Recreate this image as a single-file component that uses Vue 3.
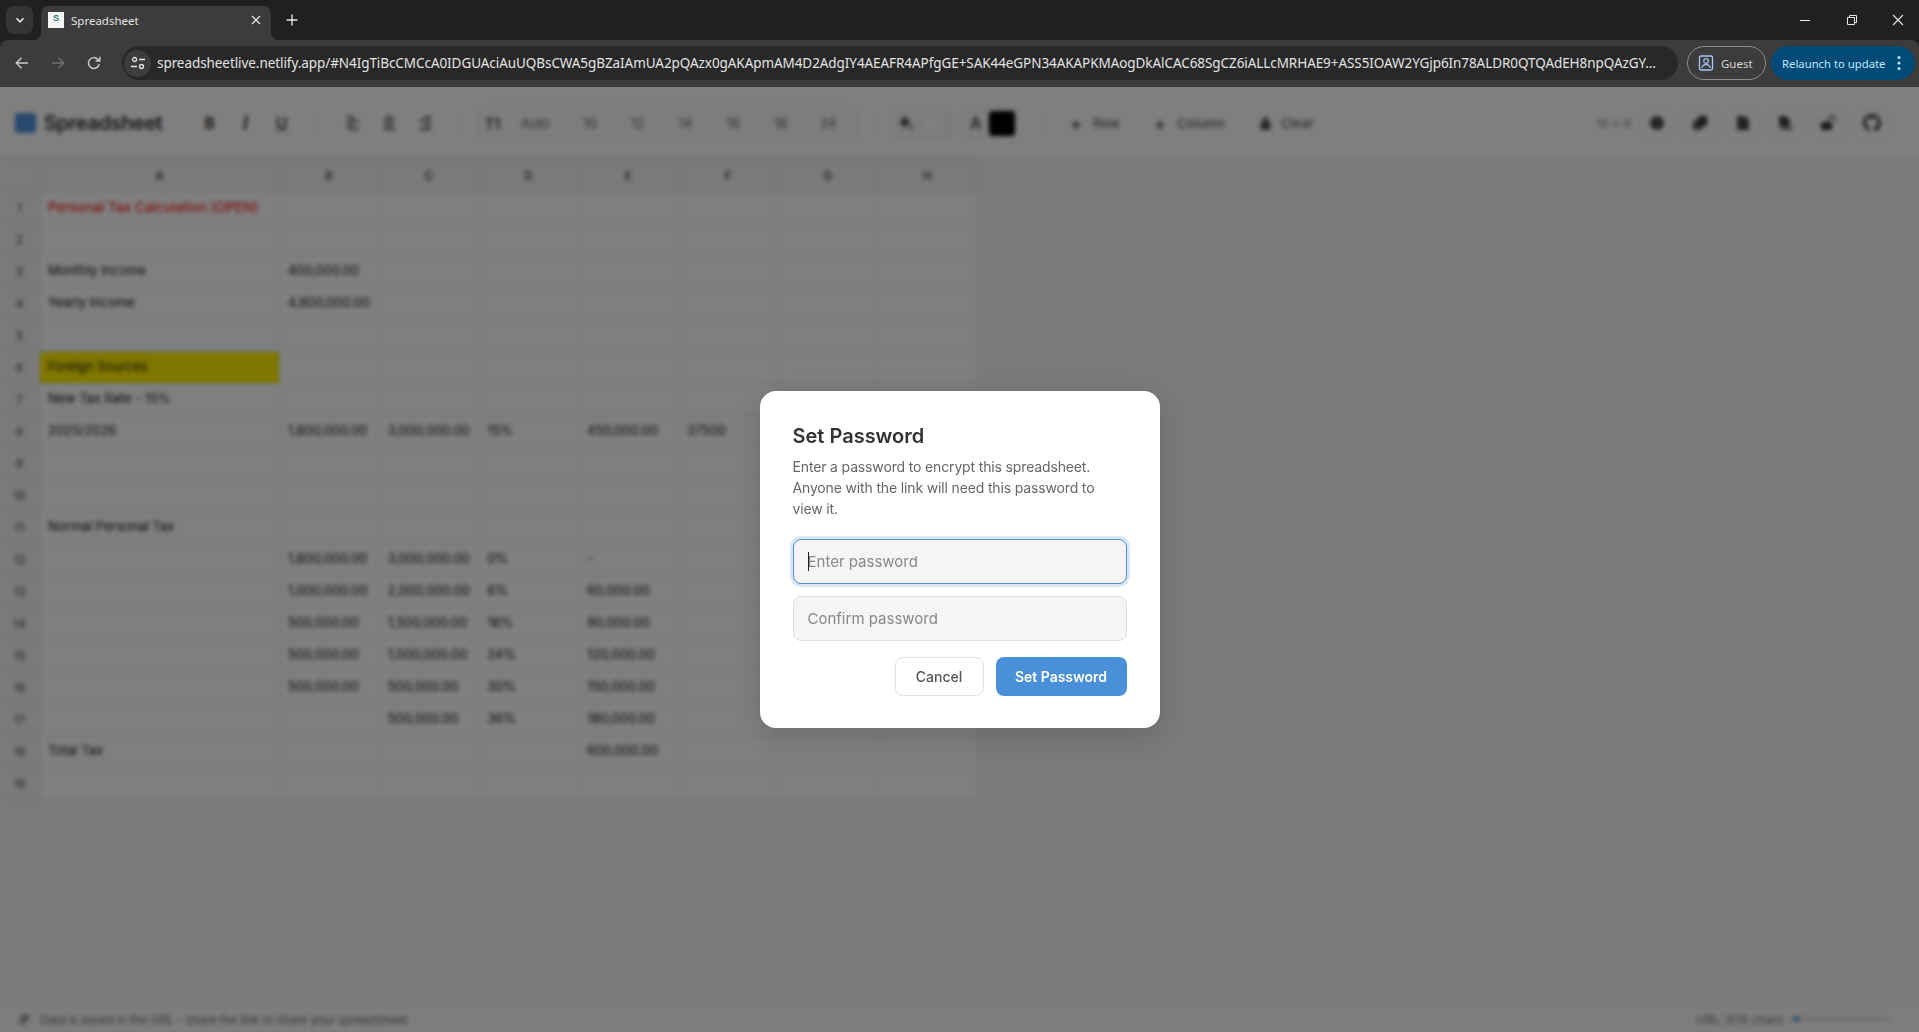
<script setup>
const url =
  'spreadsheetlive.netlify.app/#N4IgTiBcCMCcA0IDGUAciAuUQBsCWA5gBZaIAmUA2pQAzx0gAKApmAM4D2AdgIY4AEAFR4APfgGE+SAK44eGPN34AKAPKMAogDkAlCAC68SgCZ6iALLcMRHAE9+ASS5IOAW2YGjp6In78ALDR0QTQAdEH8npQAzGY...'

const columns = ['A', 'B', 'C', 'D', 'E', 'F', 'G', 'H']
const fontSizes = ['10', '12', '14', '16', '18', '24']

const filled = {
  1: { a: 'Personal Tax Calculation (OPEN)', kind: 'red' },
  3: { a: 'Monthly Income', rest: ['400,000.00'] },
  4: { a: 'Yearly Income', rest: ['4,800,000.00'] },
  6: { a: 'Foreign Sources', kind: 'yellow' },
  7: { a: 'New Tax Rate - 15%' },
  8: { a: '2025/2026', rest: ['1,800,000.00', '3,000,000.00', '15%', '450,000.00', '37500'] },
  11: { a: 'Normal Personal Tax' },
  12: { rest: ['1,800,000.00', '3,000,000.00', '0%', '-'] },
  13: { rest: ['1,000,000.00', '2,000,000.00', '6%', '60,000.00'] },
  14: { rest: ['500,000.00', '1,500,000.00', '18%', '90,000.00'] },
  15: { rest: ['500,000.00', '1,000,000.00', '24%', '120,000.00'] },
  16: { rest: ['500,000.00', '500,000.00', '30%', '150,000.00'] },
  17: { rest: ['', '500,000.00', '36%', '180,000.00'] },
  18: { a: 'Total Tax', rest: ['', '', '', '600,000.00'] },
}

const rows = Array.from({ length: 19 }, (_, i) => {
  const row = filled[i + 1] || {}
  const rest = row.rest || []
  return {
    num: i + 1,
    kind: row.kind || '',
    cells: [row.a || '', ...Array.from({ length: 7 }, (_, c) => rest[c] || '')],
  }
})
</script>

<template>
  <div class="browser">
    <div class="tabstrip">
      <div class="tab-search">
        <svg width="10" height="10" viewBox="0 0 10 10"><path d="M1.5 3.2 5 6.8l3.5-3.6" fill="none" stroke="#e3e3e3" stroke-width="1.6" /></svg>
      </div>
      <div class="tab">
        <span class="favicon">S</span>
        <span class="tab-title">Spreadsheet</span>
        <svg class="tab-close" width="10" height="10" viewBox="0 0 10 10"><path d="M1 1l8 8M9 1 1 9" stroke="#e3e3e3" stroke-width="1.3" /></svg>
      </div>
      <svg class="new-tab" width="12" height="12" viewBox="0 0 12 12"><path d="M6 .5v11M.5 6h11" stroke="#e3e3e3" stroke-width="1.4" /></svg>
      <div class="window-controls">
        <svg width="12" height="12" viewBox="0 0 12 12"><path d="M1 6.5h10" stroke="#e8e8e8" /></svg>
        <svg width="12" height="12" viewBox="0 0 12 12"><path d="M1.5 3.5h7v7h-7zM3.5 3.5v-2h7v7h-2" fill="none" stroke="#e8e8e8" /></svg>
        <svg width="12" height="12" viewBox="0 0 12 12"><path d="M1 1l10 10M11 1 1 11" stroke="#e8e8e8" stroke-width="1.1" /></svg>
      </div>
    </div>

    <div class="navbar">
      <svg class="nav-icon" width="16" height="16" viewBox="0 0 16 16"><path d="M14 8H2.5M7.5 2.8 2.3 8l5.2 5.2" fill="none" stroke="#c7c7c7" stroke-width="1.5" /></svg>
      <svg class="nav-icon" width="16" height="16" viewBox="0 0 16 16"><path d="M2 8h11.5M8.5 2.8 13.7 8l-5.2 5.2" fill="none" stroke="#6e6e6e" stroke-width="1.5" /></svg>
      <svg class="nav-icon" width="16" height="16" viewBox="0 0 16 16"><path d="M13.2 9a5.4 5.4 0 1 1-1.3-4.6L13.8 6M13.8 1.8V6H9.6" fill="none" stroke="#c7c7c7" stroke-width="1.5" /></svg>
      <div class="omnibox">
        <span class="site-info">
          <svg width="16" height="16" viewBox="0 0 16 16"><circle cx="4.5" cy="4.5" r="2" fill="none" stroke="#e3e3e3" stroke-width="1.3" /><path d="M9 4.5h6M1 11.5h6" stroke="#e3e3e3" stroke-width="1.3" /><circle cx="11.5" cy="11.5" r="2" fill="none" stroke="#e3e3e3" stroke-width="1.3" /></svg>
        </span>
        <span class="url">{{ url }}</span>
      </div>
      <div class="guest">
        <svg width="16" height="16" viewBox="0 0 16 16"><rect x="1.5" y="1" width="13" height="14" rx="1.5" fill="none" stroke="#a8c7fa" stroke-width="1.3" /><circle cx="8" cy="6" r="2.3" fill="none" stroke="#a8c7fa" stroke-width="1.2" /><path d="M3.8 13c.4-2.4 2.2-3.3 4.2-3.3s3.8.9 4.2 3.3" fill="none" stroke="#a8c7fa" stroke-width="1.2" /></svg>
        <span>Guest</span>
      </div>
      <div class="relaunch">
        <span>Relaunch to update</span>
        <svg width="4" height="16" viewBox="0 0 4 16"><circle cx="2" cy="2.5" r="1.5" fill="#c2e7ff" /><circle cx="2" cy="8" r="1.5" fill="#c2e7ff" /><circle cx="2" cy="13.5" r="1.5" fill="#c2e7ff" /></svg>
      </div>
    </div>

    <div class="page">
      <header class="toolbar">
        <div class="brand">
          <svg width="21" height="20" viewBox="0 0 21 20"><rect width="21" height="20" rx="3" fill="#4a90d9" /><path d="M7 0v20M14 0v20" stroke="#6ea6e2" /></svg>
          <span>Spreadsheet</span>
        </div>

        <div class="tool-group first">
          <button class="tool bold">B</button>
          <button class="tool italic">I</button>
          <button class="tool underline">U</button>
        </div>
        <span class="sep"></span>
        <div class="tool-group">
          <button class="tool">
            <svg width="14" height="16" viewBox="0 0 14 16"><path d="M1 2h7M1 6h12M1 10h7M1 14h12" stroke="#555" stroke-width="2" /></svg>
          </button>
          <button class="tool">
            <svg width="14" height="16" viewBox="0 0 14 16"><path d="M3 2h8M1 6h12M3 10h8M1 14h12" stroke="#555" stroke-width="2" /></svg>
          </button>
          <button class="tool">
            <svg width="14" height="16" viewBox="0 0 14 16"><path d="M6 2h7M1 6h12M6 10h7M1 14h12" stroke="#555" stroke-width="2" /></svg>
          </button>
        </div>
        <span class="sep"></span>

        <div class="size-group">
          <span class="size-icon">T1</span>
          <button class="size-btn auto">Auto</button>
          <button v-for="s in fontSizes" :key="s" class="size-btn">{{ s }}</button>
        </div>
        <span class="sep short"></span>

        <div class="color-group fill">
          <svg width="16" height="16" viewBox="0 0 16 16"><path d="M7 1 1.5 7.5 7 13l5.5-5.5z" fill="#555" /><path d="M13.5 10c1 1.4 1.5 2.2 1.5 3a1.5 1.5 0 0 1-3 0c0-.8.5-1.6 1.5-3z" fill="#555" /></svg>
          <span class="swatch white"></span>
        </div>
        <div class="color-group text">
          <span class="color-letter">A</span>
          <span class="swatch black"></span>
        </div>
        <span class="sep wide"></span>

        <button class="action"><b>+</b>Row</button>
        <button class="action"><b>+</b>Column</button>
        <button class="action">
          <svg width="13" height="15" viewBox="0 0 13 15"><path d="M4.5 1h4v3.5l3 2V14h-10V6.5l3-2z" fill="#555" /></svg>
          Clear
        </button>

        <div class="right-tools">
          <span class="dims">10 × 8</span>
          <button class="square">
            <svg width="16" height="16" viewBox="0 0 16 16"><circle cx="8" cy="8" r="7" fill="#444" /><path d="M1 8h14M8 1c4 4 4 10 0 14M8 1c-4 4-4 10 0 14" stroke="#666" fill="none" stroke-width=".7" /></svg>
          </button>
          <button class="square">
            <svg width="16" height="16" viewBox="0 0 16 16"><rect x="1" y="5" width="9" height="10" rx="1.5" fill="#555" /><rect x="6" y="1" width="9" height="10" rx="1.5" fill="#333" /></svg>
          </button>
          <button class="square">
            <svg width="14" height="16" viewBox="0 0 14 16"><path d="M1 1h8l4 4v10H1z" fill="#444" /><path d="M7 1v4M5 3h4" stroke="#777" /></svg>
          </button>
          <button class="square">
            <svg width="16" height="16" viewBox="0 0 16 16"><path d="M1 1h7l4 4v7H1z" fill="#444" /><path d="M3 14h12" stroke="#555" stroke-width="2" /></svg>
          </button>
          <button class="square">
            <svg width="18" height="16" viewBox="0 0 18 16"><rect x="1" y="7" width="11" height="8" rx="1.5" fill="#333" /><path d="M9 7V4a3 3 0 0 1 6 0v2" fill="none" stroke="#555" stroke-width="1.6" /></svg>
          </button>
          <button class="square">
            <svg width="18" height="18" viewBox="0 0 16 16"><path fill="#3d3d3d" d="M8 0C3.58 0 0 3.58 0 8c0 3.54 2.29 6.53 5.47 7.59.4.07.55-.17.55-.38 0-.19-.01-.82-.01-1.49-2.01.37-2.53-.49-2.69-.94-.09-.23-.48-.94-.82-1.13-.28-.15-.68-.52-.01-.53.63-.01 1.08.58 1.23.82.72 1.21 1.87.87 2.33.66.07-.52.28-.87.51-1.07-1.78-.2-3.64-.89-3.64-3.95 0-.87.31-1.59.82-2.15-.08-.2-.36-1.02.08-2.12 0 0 .67-.21 2.2.82.64-.18 1.32-.27 2-.27s1.36.09 2 .27c1.53-1.04 2.2-.82 2.2-.82.44 1.1.16 1.92.08 2.12.51.56.82 1.27.82 2.15 0 3.07-1.87 3.75-3.65 3.95.29.25.54.73.54 1.48 0 1.07-.01 1.93-.01 2.2 0 .21.15.46.55.38A8.01 8.01 0 0 0 16 8c0-4.42-3.58-8-8-8z" /></svg>
          </button>
        </div>
      </header>

      <main class="sheet">
        <div class="grid">
          <div class="corner head"></div>
          <div v-for="c in columns" :key="c" class="col-head head">{{ c }}</div>
          <template v-for="row in rows" :key="row.num">
            <div class="row-head head">{{ row.num }}</div>
            <div
              v-for="(cell, i) in row.cells"
              :key="i"
              class="cell"
              :class="i === 0 ? row.kind : ''"
            >{{ cell }}</div>
          </template>
        </div>
      </main>

      <footer class="status">
        <span class="status-left">
          <svg width="14" height="14" viewBox="0 0 14 14"><path d="M6 8 8.5 5.5M5 5.5 7 3.5a2.3 2.3 0 0 1 3.3 3.3L8.5 8.5M9 8.5l-2 2A2.3 2.3 0 0 1 3.7 7.2L5.5 5.5" fill="none" stroke="#555" stroke-width="1.5" /></svg>
          Data is saved in the URL - share the link to share your spreadsheet
        </span>
        <span class="status-right">
          URL: 674 chars
          <span class="meter"><span class="meter-fill"></span></span>
        </span>
      </footer>

      <div class="overlay">
        <div class="dialog">
          <h2>Set Password</h2>
          <p>Enter a password to encrypt this spreadsheet. Anyone with the link will need this password to view it.</p>
          <div class="field">
            <input class="focused" type="password" placeholder="Enter password" />
            <span class="caret"></span>
          </div>
          <div class="field">
            <input type="password" placeholder="Confirm password" />
          </div>
          <div class="dialog-actions">
            <button class="btn-cancel">Cancel</button>
            <button class="btn-primary">Set Password</button>
          </div>
        </div>
      </div>
    </div>
  </div>
</template>

<style>
html,
body {
  margin: 0;
  height: 100%;
  overflow: hidden;
}
</style>

<style scoped>
* {
  box-sizing: border-box;
}
button {
  font: inherit;
  border: 0;
  background: none;
  color: inherit;
  padding: 0;
}

.browser {
  display: flex;
  flex-direction: column;
  height: 1032px;
  font-family: "Noto Sans", sans-serif;
  background: #1f2120;
}

/* chrome */
.tabstrip {
  display: flex;
  align-items: flex-end;
  height: 40px;
  flex: none;
  position: relative;
}
.tab-search {
  width: 27px;
  height: 28px;
  margin: 0 8px 6px 6px;
  border-radius: 8px;
  background: #333534;
  display: flex;
  align-items: center;
  justify-content: center;
}
.tab {
  position: relative;
  display: flex;
  align-items: center;
  width: 230px;
  height: 34px;
  padding: 0 10px 6px 7px;
  border-radius: 8px 8px 0 0;
  background: #3c3c3c;
}
.tab::before,
.tab::after {
  content: "";
  position: absolute;
  bottom: 0;
  width: 8px;
  height: 8px;
}
.tab::before {
  left: -8px;
  background: radial-gradient(circle at 0 0, transparent 8px, #3c3c3c 8.5px);
}
.tab::after {
  right: -8px;
  background: radial-gradient(circle at 100% 0, transparent 8px, #3c3c3c 8.5px);
}
.favicon {
  width: 16px;
  height: 16px;
  background: #f4f4f4;
  color: #2a7a72;
  font: 700 9px/13px "Liberation Sans", sans-serif;
  text-align: center;
  flex: none;
}
.tab-title {
  margin-left: 7px;
  font-size: 11.5px;
  color: #e3e3e3;
  flex: 1;
}
.new-tab {
  margin: 0 0 14px 15px;
}
.window-controls {
  margin-left: auto;
  display: flex;
  gap: 34.5px;
  padding: 0 15px 14px 0;
}

.navbar {
  display: flex;
  align-items: center;
  height: 47px;
  flex: none;
  padding: 0 4px 1px 14px;
  background: #3c3c3c;
  border-radius: 8px 8px 0 0;
}
.nav-icon {
  margin-right: 20px;
  flex: none;
}
.omnibox {
  display: flex;
  align-items: center;
  width: 1556px;
  height: 34px;
  padding: 0 2px;
  border-radius: 17px;
  background: #282828;
  flex: none;
}
.site-info {
  width: 27px;
  height: 27px;
  border-radius: 50%;
  background: #3c3c3c;
  display: flex;
  align-items: center;
  justify-content: center;
  flex: none;
}
.url {
  margin-left: 6px;
  font-size: 13.5px;
  color: #e3e3e3;
  white-space: nowrap;
  letter-spacing: -0.07px;
}
.guest {
  display: flex;
  align-items: center;
  gap: 7px;
  width: 79px;
  height: 34px;
  margin-left: 9px;
  padding-left: 10px;
  border: 1px solid #8e8e8e;
  border-radius: 17px;
  font-size: 11.5px;
  color: #d5d5d5;
  flex: none;
}
.relaunch {
  display: flex;
  align-items: center;
  justify-content: space-between;
  width: 144px;
  height: 34px;
  margin-left: 5px;
  padding: 0 14px 0 11px;
  border-radius: 17px;
  background: #004a77;
  font-size: 11.3px;
  color: #c2e7ff;
  flex: none;
}

/* page behind the dialog */
.page {
  position: relative;
  flex: 1;
  display: flex;
  flex-direction: column;
  min-height: 0;
  background: #f5f5f5;
  font-family: Inter, sans-serif;
  color: #333;
}
.toolbar {
  display: flex;
  align-items: center;
  height: 71px;
  flex: none;
  padding: 2px 29px 0 15px;
  background: #fff;
  border-bottom: 1px solid #eee;
  font-size: 13px;
  color: #555;
}
.brand {
  display: flex;
  align-items: center;
  gap: 8px;
  font-size: 20px;
  font-weight: 600;
  letter-spacing: -0.4px;
  color: #333;
}
.tool-group {
  display: flex;
  gap: 4px;
}
.tool-group.first {
  margin-left: 31px;
}
.tool {
  display: flex;
  align-items: center;
  justify-content: center;
  width: 32px;
  height: 32px;
  font-size: 16px;
  color: #555;
}
.bold {
  font-weight: 800;
}
.italic {
  font-style: italic;
  font-weight: 700;
  font-family: "Liberation Serif", serif;
  font-size: 19px;
}
.underline {
  text-decoration: underline;
  font-weight: 700;
}
.sep {
  width: 1px;
  height: 24px;
  margin: 0 18px 0 20px;
  background: #eee;
  flex: none;
}
.sep.short {
  margin: 0 16px;
}
.sep.wide {
  margin: 0 15px 0 25px;
}
.size-group {
  display: flex;
  align-items: center;
  gap: 4px;
  height: 39px;
  margin-left: -2px;
  padding: 0 7px 0 0;
  border: 1px solid #efefef;
  border-radius: 8px;
  background: #fafafa;
}
.size-icon {
  width: 28px;
  text-align: center;
  font-weight: 700;
  font-size: 14px;
}
.size-btn {
  width: 43.6px;
  font-size: 13px;
  color: #666;
  text-align: center;
}
.size-btn.auto {
  width: 50px;
  margin-right: 4px;
}
.color-group {
  display: flex;
  align-items: center;
  height: 33px;
  padding: 0 6px;
  gap: 7px;
  border: 1px solid #eee;
  border-radius: 6px;
  background: #fafafa;
}
.color-group.fill {
  width: 61px;
}
.color-group.text {
  width: 56px;
  margin-left: 9px;
  gap: 7px;
  padding: 0 2px 0 8px;
}
.color-letter {
  font-size: 16px;
  font-weight: 600;
}
.swatch {
  width: 24px;
  height: 25px;
  border-radius: 4px;
  flex: none;
}
.swatch.white {
  background: #fff;
  border: 1px solid #eee;
}
.swatch.black {
  width: 26px;
  background: #000;
}
.action {
  display: flex;
  align-items: center;
  gap: 11px;
  height: 32px;
  padding: 0 12px;
  margin-right: 10px;
  font-size: 13px;
  font-weight: 500;
  color: #666;
}
.action b {
  font-size: 18px;
  font-weight: 600;
  color: #555;
}
.action:last-of-type {
  gap: 9px;
}
.right-tools {
  display: flex;
  align-items: center;
  gap: 7px;
  margin-left: auto;
}
.dims {
  font-size: 12px;
  color: #888;
  margin-right: 1px;
}
.square {
  display: flex;
  align-items: center;
  justify-content: center;
  width: 36px;
  height: 32px;
  border: 1px solid #f2f2f2;
  border-radius: 6px;
}

.sheet {
  flex: 1;
  min-height: 0;
  background: #f5f5f5;
  overflow: hidden;
}
.grid {
  display: grid;
  grid-template-columns: 40px 239.7px repeat(7, 99.75px);
  grid-template-rows: 34px repeat(19, 32px);
  width: max-content;
}
.head {
  display: flex;
  align-items: center;
  justify-content: center;
  background: #f5f5f5;
  border-right: 1px solid #e0e0e0;
  border-bottom: 1px solid #e0e0e0;
  font-size: 12px;
  font-weight: 600;
  color: #555;
}
.corner,
.col-head {
  border-top: 1px solid #e0e0e0;
  padding-top: 1px;
}
.row-head {
  font-weight: 500;
  color: #666;
}
.cell {
  display: flex;
  align-items: center;
  padding: 0 8px 3px;
  background: #fff;
  border-right: 1px solid #e8e8e8;
  border-bottom: 1px solid #e8e8e8;
  font-size: 13px;
  letter-spacing: -0.05px;
  color: #222;
  white-space: nowrap;
  overflow: visible;
}
.cell.red {
  color: #ff0000;
  font-size: 13.7px;
  letter-spacing: 0;
  padding-bottom: 2px;
}
.cell.yellow {
  background: #ffee00;
}

.status {
  display: flex;
  align-items: center;
  justify-content: space-between;
  height: 27px;
  flex: none;
  padding: 0 29px 0 17px;
  background: #fafafa;
  border-top: 1px solid #eee;
  font-size: 12px;
  color: #777;
}
.status-left {
  display: flex;
  align-items: center;
  gap: 9px;
  letter-spacing: -0.15px;
}
.status-right {
  display: flex;
  align-items: center;
  gap: 9px;
}
.meter {
  display: block;
  width: 98px;
  height: 4px;
  border-radius: 2px;
  background: #e0e0e0;
  overflow: hidden;
}
.meter-fill {
  display: block;
  width: 8%;
  height: 100%;
  background: #4a90d9;
}

/* dialog */
.overlay {
  position: absolute;
  inset: 0;
  display: flex;
  align-items: center;
  justify-content: center;
  background: rgba(0, 0, 0, 0.5);
  backdrop-filter: blur(2px);
}
.dialog {
  width: 400px;
  height: 337px;
  padding: 33px 33px 32px;
  border-radius: 16px;
  background: #fff;
  box-shadow: 0 8px 32px rgba(0, 0, 0, 0.15);
}
.dialog h2 {
  margin: 0 0 8px;
  font-size: 20px;
  line-height: 24px;
  font-weight: 600;
  color: #333;
}
.dialog p {
  margin: 0 0 20px;
  font-size: 14px;
  line-height: 21px;
  letter-spacing: -0.15px;
  color: #666;
}
.field {
  position: relative;
  margin-bottom: 12px;
}
.field input {
  display: block;
  width: 100%;
  height: 45px;
  padding: 0 14px;
  border: 1px solid #e0e0e0;
  border-radius: 8px;
  background: #f5f5f5;
  font: 15px Inter, sans-serif;
  color: #333;
  outline: none;
}
.field input::placeholder {
  color: #888;
  opacity: 1;
}
.field input.focused {
  border-color: #4a90d9;
  box-shadow: 0 0 0 3px rgba(74, 144, 217, 0.2);
}
.caret {
  position: absolute;
  left: 15px;
  top: 13px;
  width: 1px;
  height: 19px;
  background: #222;
}
.dialog-actions {
  display: flex;
  justify-content: flex-end;
  gap: 12px;
  margin-top: 16px;
}
.dialog-actions button {
  height: 39px;
  border-radius: 8px;
  font-size: 14px;
}
.btn-cancel {
  width: 89px;
  border: 1px solid #e0e0e0;
  background: #fff;
  color: #555;
  font-weight: 500;
}
.btn-primary {
  width: 131px;
  background: #4a90d9;
  color: #fff;
  font-weight: 600;
}
</style>
